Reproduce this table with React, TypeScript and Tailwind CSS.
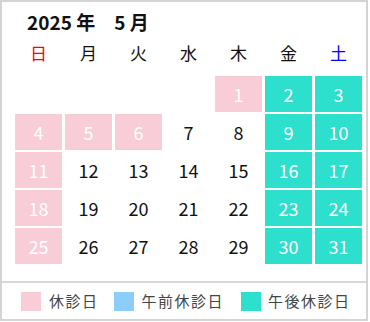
import React from 'react';

type DayType = 'closed' | 'am' | 'pm' | 'open';

const weekdays = [
  { label: '日', color: 'text-[#ff0000]' },
  { label: '月', color: 'text-[#111]' },
  { label: '火', color: 'text-[#111]' },
  { label: '水', color: 'text-[#111]' },
  { label: '木', color: 'text-[#111]' },
  { label: '金', color: 'text-[#111]' },
  { label: '土', color: 'text-[#0000ff]' },
];

const closedDays = [1, 4, 5, 6, 11, 18, 25];
const pmDays = [2, 3, 9, 10, 16, 17, 23, 24, 30, 31];

const getType = (day: number): DayType => {
  if (closedDays.includes(day)) return 'closed';
  if (pmDays.includes(day)) return 'pm';
  return 'open';
};

const cellClass = (type: DayType) => {
  switch (type) {
    case 'closed':
      return 'bg-[#f8cdd8] text-white';
    case 'am':
      return 'bg-[#8ccdf9] text-white';
    case 'pm':
      return 'bg-[#2ddfcd] text-white';
    default:
      return 'text-[#111]';
  }
};

const App = () => {
  // May 2025 starts on Thursday
  const offset = 4;
  const cells: (number | null)[] = [];
  for (let i = 0; i < offset; i++) cells.push(null);
  for (let d = 1; d <= 31; d++) cells.push(d);

  return (
    <div
      className="w-[368px] h-[321px] border-2 border-[#d4d4d4] bg-white flex flex-col"
      style={{ fontFamily: '"Noto Sans CJK JP", "Noto Sans", sans-serif' }}
    >
      <div className="pl-[13px] pr-[4px]">
        <div className="pl-[12px] pt-[8px] h-[32px] leading-[24px] text-[19px] font-bold text-[#111] whitespace-pre">
          2025 年　5 月
        </div>
        <div className="grid grid-cols-7 gap-x-[3px] h-[36px] mt-[1px]">
          {weekdays.map((w) => (
            <div key={w.label} className={`flex items-center justify-center text-[17px] ${w.color}`}>
              {w.label}
            </div>
          ))}
        </div>
        <div className="grid grid-cols-7 gap-x-[3px] gap-y-[2px] mt-[5px] auto-rows-[36px]">
          {cells.map((d, i) =>
            d === null ? (
              <div key={`e${i}`} />
            ) : (
              <div
                key={d}
                className={`flex items-center justify-center text-[18px] ${cellClass(getType(d))}`}
              >
                {d}
              </div>
            )
          )}
        </div>
      </div>

      <div className="mt-[17px] border-t-2 border-[#d8d8d8] flex-1 flex items-center pl-[19px] text-[15px] tracking-[1.5px] text-[#444]">
        <div className="w-[20px] h-[19px] bg-[#f8cdd8]" />
        <span className="ml-[8px]">休診日</span>
        <div className="w-[20px] h-[19px] bg-[#8ccdf9] ml-[15px]" />
        <span className="ml-[8px]">午前休診日</span>
        <div className="w-[20px] h-[19px] bg-[#2ddfcd] ml-[17px]" />
        <span className="ml-[7px]">午後休診日</span>
      </div>
    </div>
  );
};

export default App;
